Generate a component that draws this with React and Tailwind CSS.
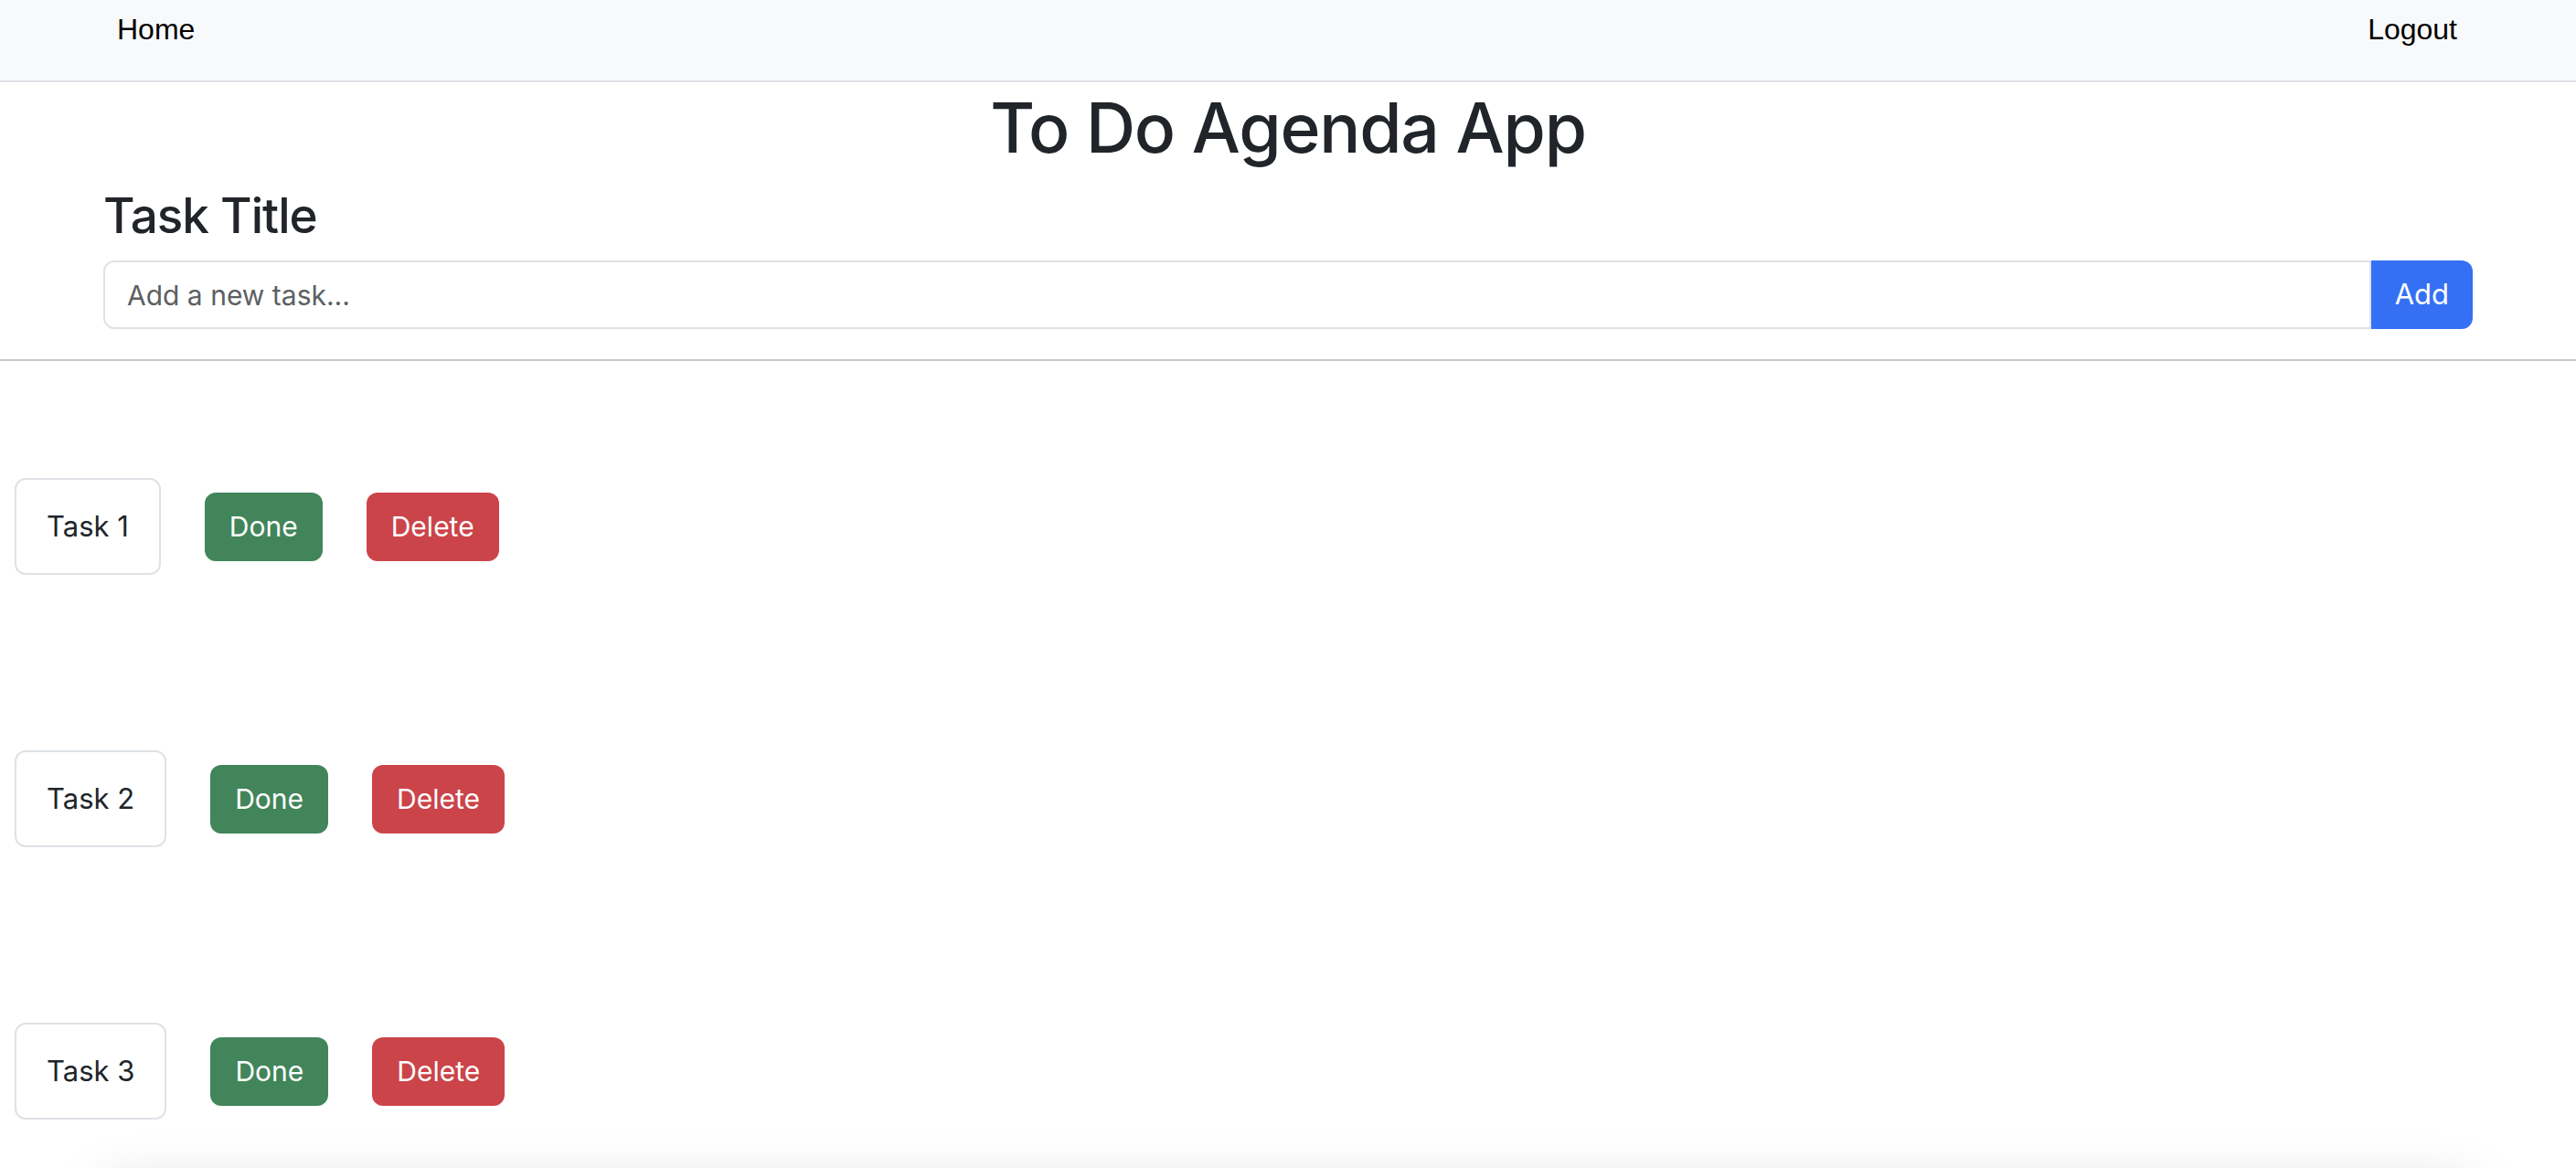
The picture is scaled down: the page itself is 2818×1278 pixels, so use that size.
import React from "react";

const tasks = ["Task 1", "Task 2", "Task 3"];

export default function App() {
  return (
    <div className="relative h-[1278px] overflow-hidden bg-white text-[#212529] font-['Inter',sans-serif]">
      <nav className="flex h-[90px] justify-between border-b-2 border-[#dee2e6] bg-[#f8f9fa] pl-[128px] pr-[130px] pt-[8px] font-['Liberation_Sans',Arial,sans-serif] text-[32px] leading-[48px] text-black">
        <span>Home</span>
        <span>Logout</span>
      </nav>

      <h1 className="mt-[2px] text-center text-[75px] font-medium leading-[96px] tracking-[-1.2px]">To Do Agenda App</h1>

      <div className="mx-[113px]">
        <h3 className="mt-[15px] text-[53px] font-medium leading-[67px] tracking-[-1px]">Task Title</h3>
        <div className="mt-[15px] flex h-[75px]">
          <input
            className="h-full flex-1 rounded-l-[12px] border-2 border-[#dee2e6] bg-white pl-[24px] text-[30px] text-[#212529] outline-none placeholder:text-[#5c5f63]"
            placeholder="Add a new task..."
          />
          <button className="h-full rounded-r-[12px] bg-[#3570f4] px-[26px] text-[31px] text-white">Add</button>
        </div>
      </div>

      <hr className="mt-[33px] border-t-2 border-[#c8c8c8]" />

      <div className="mt-[128px] flex flex-col gap-[192px] pl-[16px]">
        {tasks.map((t) => (
          <div key={t} className="flex items-center gap-[48px]">
            <div className="flex h-[106px] items-center rounded-[12px] border-2 border-[#dee2e6] px-[33px] text-[31px] leading-[38px]">
              {t}
            </div>
            <button className="flex h-[75px] items-center rounded-[12px] bg-[#42855b] px-[27px] text-[30px] text-white">Done</button>
            <button className="flex h-[75px] items-center rounded-[12px] bg-[#cb444a] px-[27px] text-[30px] text-white">Delete</button>
          </div>
        ))}
      </div>

      <div className="mx-[110px] mt-[62px] h-[200px] bg-white shadow-[0_0_50px_rgba(0,0,0,0.10)]" />
    </div>
  );
}
